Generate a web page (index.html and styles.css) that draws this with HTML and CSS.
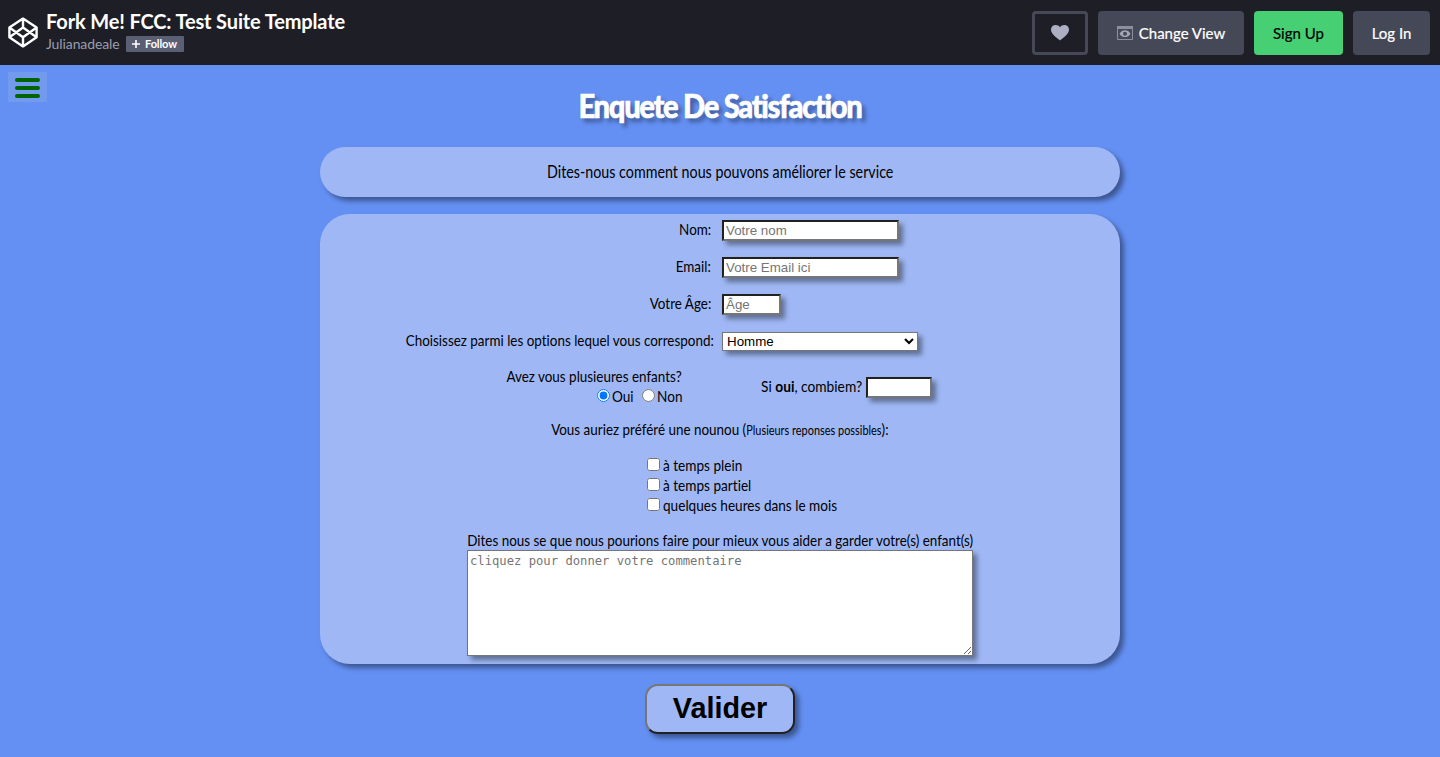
FILE: index.html
```html
<!DOCTYPE html>
<html lang="fr">
<head>
<meta charset="utf-8">
<title>Fork Me! FCC: Test Suite Template</title>
<link rel="stylesheet" href="styles.css">
</head>
<body>
<header class="topbar">
  <svg class="logo" viewBox="0 0 30 31" fill="none" stroke="#fff" stroke-width="2.4" stroke-linejoin="round"><path d="M15 1.6 28.6 10.6V20.2L15 29.4 1.4 20.2V10.6ZM15 1.6V10.6M15 20.2V29.4M1.4 10.6 15 20.2 28.6 10.6M1.4 20.2 15 10.6 28.6 20.2"/></svg>
  <div class="pen">
    <h1 class="pen-title">Fork Me! FCC: Test Suite Template</h1>
    <div class="author"><span class="author-name">Julianadeale</span><button class="follow"><svg class="plus" viewBox="0 0 8 8"><path d="M4 0V8M0 4H8" stroke="#fff" stroke-width="1.6"/></svg>Follow</button></div>
  </div>
  <nav class="actions">
    <button class="btn btn-heart"><svg class="heart" viewBox="0 0 18 16"><path fill="#adb0c2" d="M9 15.5C6.5 13.2 0 9.5 0 4.8 0 2 2 0 4.6 0 6.5 0 8.1.8 9 2.3 9.9.8 11.5 0 13.4 0 16 0 18 2 18 4.8 18 9.5 11.5 13.2 9 15.5Z"/></svg></button>
    <button class="btn btn-view"><svg class="eye" viewBox="0 0 16 14"><path fill="none" stroke="#8c8f9e" d="M.5.5H15.5V13.5H.5Z"/><path fill="#8c8f9e" d="M0 0H16V3H0Z"/><path fill="#a3a6b5" fill-rule="evenodd" d="M2.5 7.700C5 3.200 11 3.200 13.500 7.700 11 12.200 5 12.200 2.500 7.700ZM8 5.700A2 2 0 1 0 8 9.700 2 2 0 1 0 8 5.700Z"/></svg>Change View</button>
    <button class="btn btn-signup">Sign Up</button>
    <button class="btn btn-login">Log In</button>
  </nav>
</header>
<main class="page">
  <button class="menu"><span class="bar"></span><span class="bar"></span><span class="bar"></span></button>
  <h2 class="title">Enquete De Satisfaction</h2>
  <p class="intro"><span class="text">Dites-nous comment nous pouvons améliorer le service</span></p>
  <form class="survey">
    <div class="row"><label class="label" for="nom"><span class="text from-right">Nom:</span></label><input class="field" id="nom" placeholder="Votre nom"></div>
    <div class="row"><label class="label" for="email"><span class="text from-right">Email:</span></label><input class="field" id="email" placeholder="Votre Email ici"></div>
    <div class="row"><label class="label" for="age"><span class="text from-right">Votre Âge:</span></label><input class="field field-age" id="age" placeholder="Âge"></div>
    <div class="row"><label class="label label-wide" for="genre"><span class="text from-right">Choisissez parmi les options lequel vous correspond:</span></label><select class="select" id="genre"><option>Homme</option></select></div>
    <div class="children">
      <div class="has-children"><p class="q-children"><span class="text from-right">Avez vous plusieures enfants?</span></p><div class="radios"><label class="opt opt-yes"><input class="tick" type="radio" name="enf" checked><span class="text from-left">Oui</span></label><label class="opt opt-no"><input class="tick" type="radio" name="enf"><span class="text from-left">Non</span></label></div></div>
      <div class="count"><label class="count-label" for="nb"><span class="text from-left">Si <b>oui</b>, combiem?</span></label><input class="field field-count" id="nb"></div>
    </div>
    <p class="nanny"><span class="text">Vous auriez préféré une nounou (<span class="small">Plusieurs reponses possibles</span>):</span></p>
    <div class="checks">
      <label class="opt"><input class="tick" type="checkbox"><span class="text from-left">à temps plein</span></label>
      <label class="opt"><input class="tick" type="checkbox"><span class="text from-left">à temps partiel</span></label>
      <label class="opt"><input class="tick" type="checkbox"><span class="text from-left">quelques heures dans le mois</span></label>
    </div>
    <label class="comment-label" for="com"><span class="text">Dites nous se que nous pourions faire pour mieux vous aider a garder votre(s) enfant(s)</span></label>
    <textarea class="comment" id="com" placeholder="cliquez pour donner votre commentaire"></textarea>
  </form>
  <button class="submit">Valider</button>
</main>
</body>
</html>
```
FILE: styles.css
```css
* { box-sizing: border-box; }
body { margin: 0; height: 757px; overflow: hidden; background: #6490f3; color: #000; font-family: Lato, sans-serif; font-variant-ligatures: none; }
button { margin: 0; padding: 0; border: 0; }
p, h1, h2 { margin: 0; }

.topbar { display: flex; height: 65px; padding: 0 10px 0 8px; background: #1e1f26; }
.logo { width: 30px; height: 31px; margin-top: 17px; }
.pen { margin: 9px 0 0 8px; }
.pen-title { color: #fff; font-size: 20px; line-height: 24px; font-weight: 700; letter-spacing: -.14px; white-space: nowrap; }
.author { display: flex; align-items: center; height: 22px; }
.author-name { color: #9b9dad; font-size: 14px; width: 80px; letter-spacing: -.1px; line-height: 16px; padding-bottom: 1px; }
.follow { display: flex; align-items: center; justify-content: center; gap: 5px; width: 58px; height: 16px; border-radius: 1px; background: #5a5f73; color: #fff; font: 700 11px Lato, sans-serif; letter-spacing: -.1px; padding: 0 1px 1px 0; }
.plus { width: 8px; height: 8px; }
.actions { display: flex; gap: 10px; margin: 11px 0 0 auto; }
.btn { display: flex; align-items: center; justify-content: center; height: 44px; border-radius: 4px; background: #444857; color: #fff; font: 400 15px Lato, sans-serif; -webkit-text-stroke: .2px; white-space: nowrap; }
.btn-heart { width: 56px; border: 3px solid #444857; background: #1e1f26; }
.heart { width: 18px; height: 16px; }
.btn-view { width: 146px; gap: 6px; }
.eye { width: 16px; height: 14px; }
.btn-signup { width: 89px; background: #47cf73; color: #000; }
.btn-login { width: 77px; }

.page { position: relative; display: flex; flex-direction: column; align-items: center; }
.menu { position: absolute; left: 8px; top: 7px; display: flex; flex-direction: column; align-items: center; justify-content: center; gap: 4px; width: 39px; height: 30px; padding-top: 2px; background: #729bed; }
.bar { width: 25px; height: 4px; border-radius: 2px; background: #006400; }

/* Narrowed text, anchored to the side it is aligned with */
.text { display: inline-block; white-space: nowrap; transform: scaleX(.84); }
.from-right { transform-origin: right; }
.from-left { transform: scaleX(.85); transform-origin: left; }

.title { margin-top: 18px; height: 64px; line-height: 44px; color: #fff; font-size: 33px; font-weight: 900; letter-spacing: -1.5px; text-shadow: 4px 4px 5px rgba(0,0,0,.4); -webkit-text-stroke: .6px #fff; white-space: nowrap; transform: scaleX(.885); }
.intro { width: 800px; height: 50px; border-radius: 30px; background: #9fb8f5; box-shadow: 4px 4px 5px rgba(0,0,0,.4); text-align: center; font-size: 17px; line-height: 50px; }
.survey { display: flex; flex-direction: column; align-items: center; width: 800px; height: 450px; margin-top: 17px; padding-top: 6px; border-radius: 30px; background: #9fb8f5; box-shadow: 4px 4px 5px rgba(0,0,0,.4); font-size: 16px; }
.row { display: flex; align-items: flex-start; width: 800px; height: 37px; }
.label { width: 402px; padding-right: 11px; text-align: right; line-height: 18px; white-space: nowrap; }
.label-wide { padding-right: 8px; }
.field { width: 177px; height: 21px; padding: 1px 2px; border: 2px inset #767676; border-radius: 0; background: #fff; font: 13.333px "Liberation Sans", sans-serif; box-shadow: 4px 4px 5px rgba(0,0,0,.4); }
.field-age { width: 59px; }
.select { width: 196px; height: 19px; margin-top: 1px; border: 1px solid #767676; border-radius: 0; background: #fff; font: 13.333px "Liberation Sans", sans-serif; box-shadow: 4px 4px 5px rgba(0,0,0,.4); }
.children { display: flex; width: 800px; height: 53px; line-height: 18px; }
.has-children { display: flex; flex-direction: column; align-items: flex-end; width: 362px; margin-top: -1px; }
.q-children { height: 20px; }
.radios { display: flex; }
.opt { display: flex; height: 20px; line-height: 18px; }
.opt-yes { width: 45px; }
.opt-no { width: 40px; }
.tick { flex: none; width: 13px; height: 13px; margin: 2px 3px 0 0; }
.radios .tick { margin-right: 2px; }
.count { display: flex; margin: 9px 0 0 79px; }
.count-label { width: 105px; white-space: nowrap; }
.count-label .text { transform: scaleX(.86); }
.field-count { width: 66px; }
.nanny { margin-top: -1px; height: 36px; line-height: 18px; }
.small { font-size: 13px; }
.checks { width: 146px; height: 74px; align-self: flex-start; margin-left: 327px; }
.comment-label { height: 20px; line-height: 20px; }
.comment { width: 506px; height: 106px; padding: 3px 2px; border: 1px solid #767676; border-radius: 0; background: #fff; font: 12.200px "DejaVu Sans Mono", monospace; box-shadow: 4px 4px 5px rgba(0,0,0,.4); resize: both; }
.submit { width: 150px; height: 50px; margin-top: 20px; padding-bottom: 2px; border: 2px outset #767676; border-radius: 13px; background: #9fb8f5; color: #000; font: 700 28.800px "Liberation Sans", sans-serif; box-shadow: 4px 4px 5px rgba(0,0,0,.4); }
```
